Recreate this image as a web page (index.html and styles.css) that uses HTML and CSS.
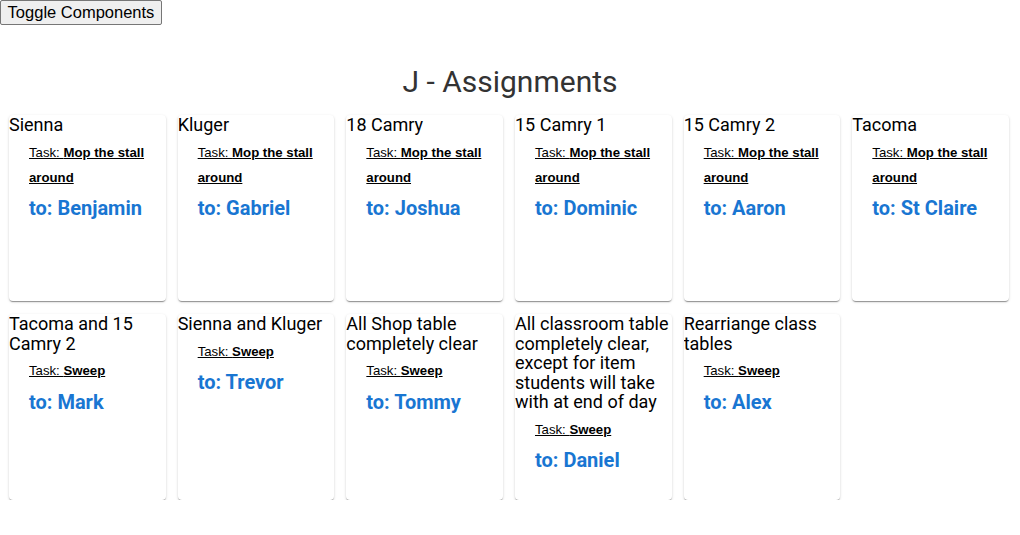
FILE: index.html
```html
<!DOCTYPE html>
<html>
<head>
<meta charset="utf-8">
<link rel="stylesheet" href="styles.css">
</head>
<body>
<button class="toggle">Toggle Components</button>
<h1 class="page-title">J - Assignments</h1>
<div class="grid">
  <div class="card"><div class="card-title">Sienna</div><div class="body"><div class="task">Task: <b>Mop the stall around</b></div><div class="to">to: Benjamin</div></div></div>
  <div class="card"><div class="card-title">Kluger</div><div class="body"><div class="task">Task: <b>Mop the stall around</b></div><div class="to">to: Gabriel</div></div></div>
  <div class="card"><div class="card-title">18 Camry</div><div class="body"><div class="task">Task: <b>Mop the stall around</b></div><div class="to">to: Joshua</div></div></div>
  <div class="card"><div class="card-title">15 Camry 1</div><div class="body"><div class="task">Task: <b>Mop the stall around</b></div><div class="to">to: Dominic</div></div></div>
  <div class="card"><div class="card-title">15 Camry 2</div><div class="body"><div class="task">Task: <b>Mop the stall around</b></div><div class="to">to: Aaron</div></div></div>
  <div class="card"><div class="card-title">Tacoma</div><div class="body"><div class="task">Task: <b>Mop the stall around</b></div><div class="to">to: St Claire</div></div></div>
  <div class="card"><div class="card-title">Tacoma and 15 Camry 2</div><div class="body"><div class="task">Task: <b>Sweep</b></div><div class="to">to: Mark</div></div></div>
  <div class="card"><div class="card-title">Sienna and Kluger</div><div class="body"><div class="task">Task: <b>Sweep</b></div><div class="to">to: Trevor</div></div></div>
  <div class="card"><div class="card-title">All Shop table completely clear</div><div class="body"><div class="task">Task: <b>Sweep</b></div><div class="to">to: Tommy</div></div></div>
  <div class="card"><div class="card-title">All classroom table completely clear, except for item students will take with at end of day</div><div class="body"><div class="task">Task: <b>Sweep</b></div><div class="to">to: Daniel</div></div></div>
  <div class="card"><div class="card-title">Rearriange class tables</div><div class="body"><div class="task">Task: <b>Sweep</b></div><div class="to">to: Alex</div></div></div>
</div>
</body>
</html>
```

FILE: styles.css
```css
html, body {
  margin: 0;
  padding: 0;
  background: #fff;
}
body {
  font-family: Roboto, "Liberation Sans", sans-serif;
}
.toggle {
  display: block;
  font-family: "Liberation Sans", Arial, sans-serif;
  font-size: 16.5px;
  padding: 1px 6px;
  height: 25px;
  width: 162px;
  background: #efefef;
  border: 1px solid #767676;
  border-radius: 2px;
  color: #000;
  margin: 0;
}
.page-title {
  margin: 40px 0 0 0;
  text-align: center;
  font-weight: 400;
  font-size: 30px;
  line-height: 34px;
  color: #333;
}
.grid {
  display: grid;
  grid-template-columns: repeat(6, 1fr);
  column-gap: 12px;
  row-gap: 13px;
  padding: 0 11px 0 9px;
  margin-top: 16px;
}
.card {
  height: 186px;
  background: #fff;
  border-radius: 4px;
  box-shadow: 0 2px 1px -1px rgba(0,0,0,0.25), 0 1px 1px 0 rgba(0,0,0,0.16), 0 1px 3px 0 rgba(0,0,0,0.14);
  overflow: hidden;
}
.card-title {
  font-size: 18px;
  line-height: 19.5px;
  color: #000;
}
.body {
  padding: 5px 20px 0 20px;
}
.task {
  font-family: "Liberation Sans", Arial, sans-serif;
  font-size: 13.2px;
  line-height: 25px;
  text-decoration: underline;
  color: #000;
}
.to {
  margin-top: 6.5px;
  font-size: 20px;
  line-height: 24px;
  font-weight: 700;
  color: #1976d2;
}
```
